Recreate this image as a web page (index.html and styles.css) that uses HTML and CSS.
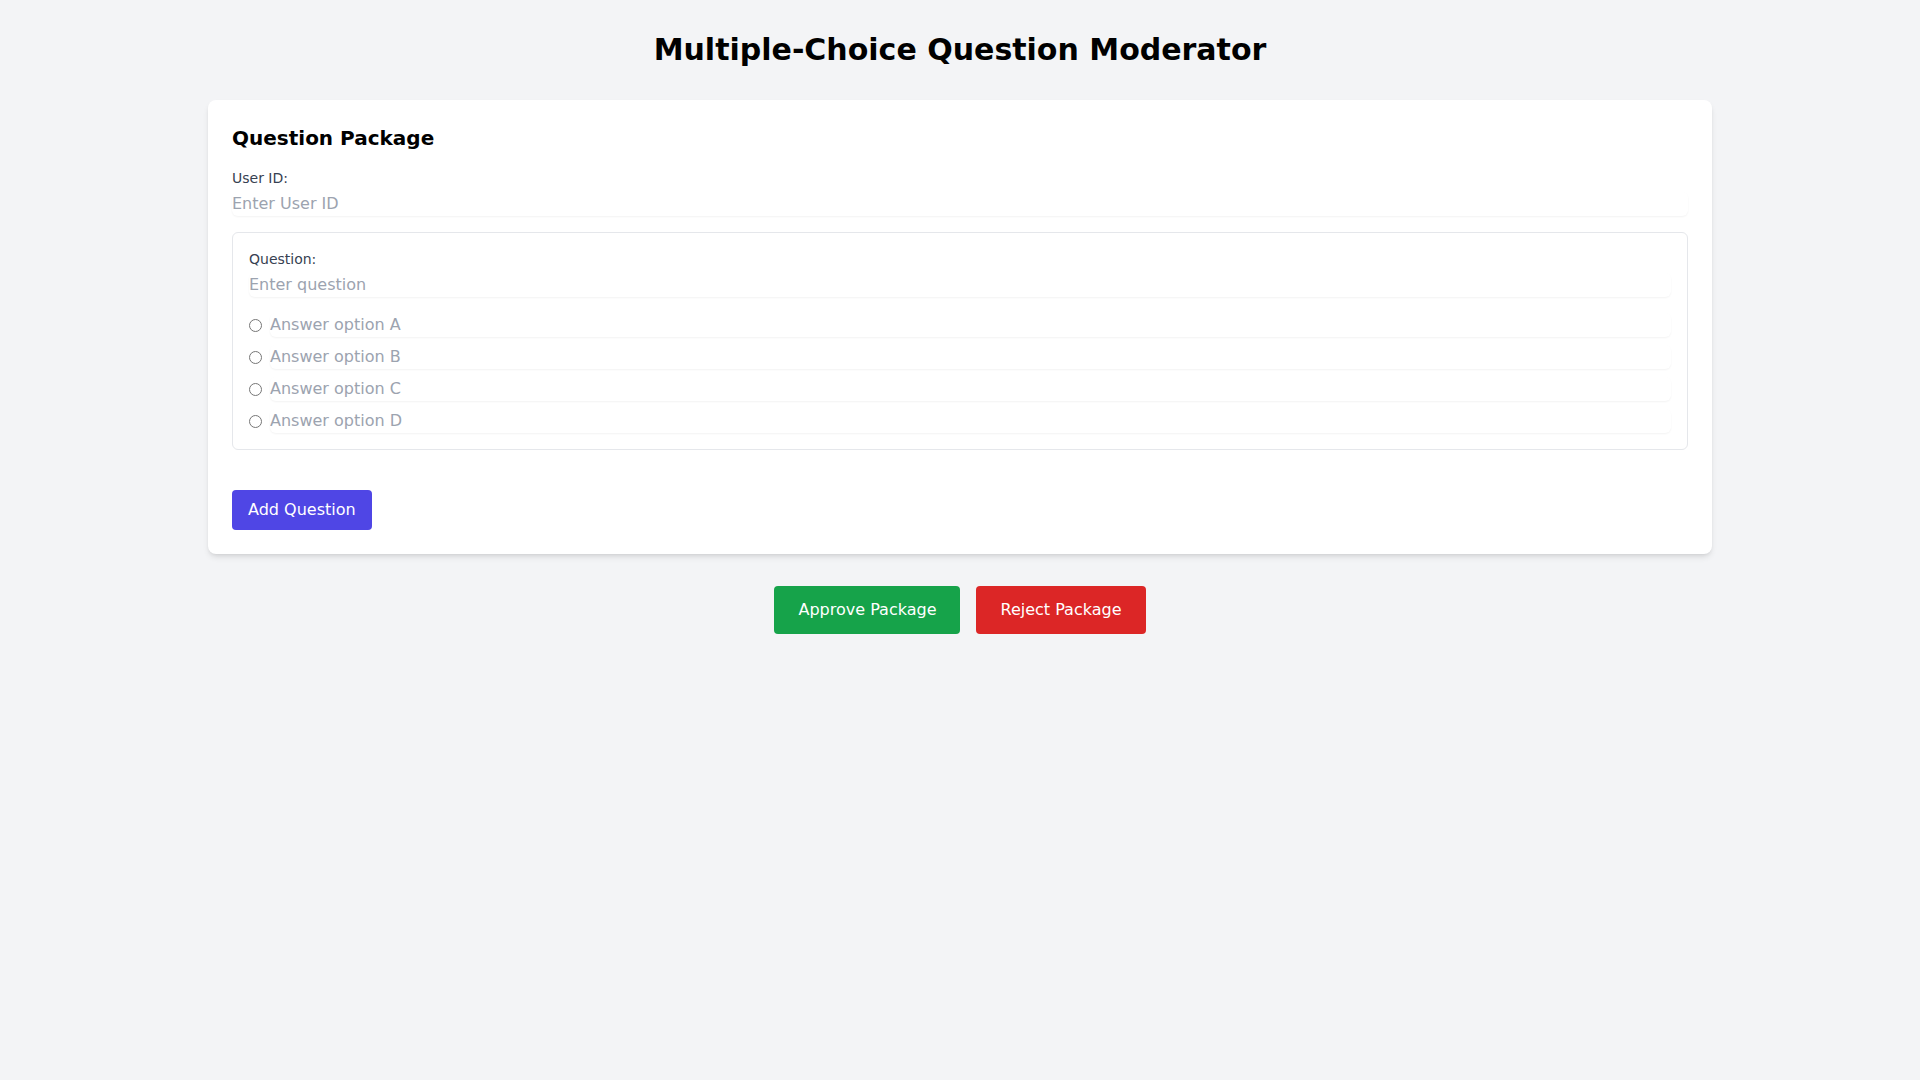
FILE: index.html
```html
<!DOCTYPE html>
<html lang="en">
<head>
<meta charset="utf-8">
<title>Multiple-Choice Question Moderator</title>
<link rel="stylesheet" href="styles.css">
</head>
<body>
<div class="container">
  <h1 class="title">Multiple-Choice Question Moderator</h1>
  <div class="card">
    <h2 class="card-title">Question Package</h2>
    <div class="field">
      <label class="label" for="uid">User ID:</label>
      <input class="text-input" id="uid" type="text" placeholder="Enter User ID">
    </div>
    <div class="questions">
      <div class="question-box">
        <label class="label" for="q1">Question:</label>
        <input class="text-input" id="q1" type="text" placeholder="Enter question">
        <div class="options">
          <div class="option"><input class="radio" type="radio" name="a1"><input class="text-input" type="text" placeholder="Answer option A"></div>
          <div class="option"><input class="radio" type="radio" name="a1"><input class="text-input" type="text" placeholder="Answer option B"></div>
          <div class="option"><input class="radio" type="radio" name="a1"><input class="text-input" type="text" placeholder="Answer option C"></div>
          <div class="option"><input class="radio" type="radio" name="a1"><input class="text-input" type="text" placeholder="Answer option D"></div>
        </div>
      </div>
    </div>
    <button class="btn btn-add" type="button">Add Question</button>
  </div>
  <div class="actions">
    <button class="btn btn-lg btn-approve" type="button">Approve Package</button>
    <button class="btn btn-lg btn-reject" type="button">Reject Package</button>
  </div>
</div>
</body>
</html>
```

FILE: styles.css
```css
* { box-sizing: border-box; }
html, body { margin: 0; padding: 0; }
body {
  background: #f3f4f6;
  font-family: "DejaVu Sans", sans-serif;
  color: #000;
  min-height: 1080px;
}
.container {
  max-width: 1536px;
  margin: 0 auto;
  padding: 32px 16px;
}
.title {
  margin: 0 0 32px;
  font-size: 30px;
  line-height: 36px;
  font-weight: 700;
  text-align: center;
}
.card {
  background: #fff;
  border-radius: 8px;
  box-shadow: 0 4px 6px -1px rgba(0,0,0,0.1), 0 2px 4px -2px rgba(0,0,0,0.1);
  padding: 24px;
}
.card-title {
  margin: 0 0 16px;
  font-size: 20px;
  line-height: 28px;
  font-weight: 700;
}
.field { margin-bottom: 16px; }
.label {
  display: block;
  font-size: 14px;
  line-height: 20px;
  color: #374151;
}
.text-input {
  display: block;
  width: 100%;
  margin-top: 4px;
  padding: 0;
  border: 0;
  border-radius: 6px;
  box-shadow: 0 1px 2px 0 rgba(0,0,0,0.05);
  font-family: inherit;
  font-size: 16px;
  line-height: 24px;
  height: 24px;
  background: transparent;
  color: #111827;
  outline: none;
}
.text-input::placeholder { color: #9ca3af; opacity: 1; }
.questions { padding-bottom: 16px; }
.question-box {
  border: 1px solid #e5e7eb;
  border-radius: 6px;
  padding: 16px;
}
.options {
  margin-top: 16px;
  display: flex;
  flex-direction: column;
  gap: 8px;
}
.option {
  display: flex;
  align-items: center;
}
.option .text-input { margin-top: 0; flex: 1; }
.radio {
  width: 13px;
  height: 13px;
  margin: 0 8px 0 0;
  flex: none;
}
.btn {
  border: 0;
  font-family: inherit;
  font-size: 16px;
  line-height: 24px;
  color: #fff;
  border-radius: 4px;
  cursor: pointer;
}
.btn-add {
  margin-top: 24px;
  padding: 8px 16px;
  background: #4f46e5;
  display: block;
}
.actions {
  margin-top: 32px;
  display: flex;
  justify-content: center;
  gap: 16px;
}
.btn-lg { padding: 12px 24px; }
.btn-approve { background: #16a34a; }
.btn-reject { background: #dc2626; }
```
